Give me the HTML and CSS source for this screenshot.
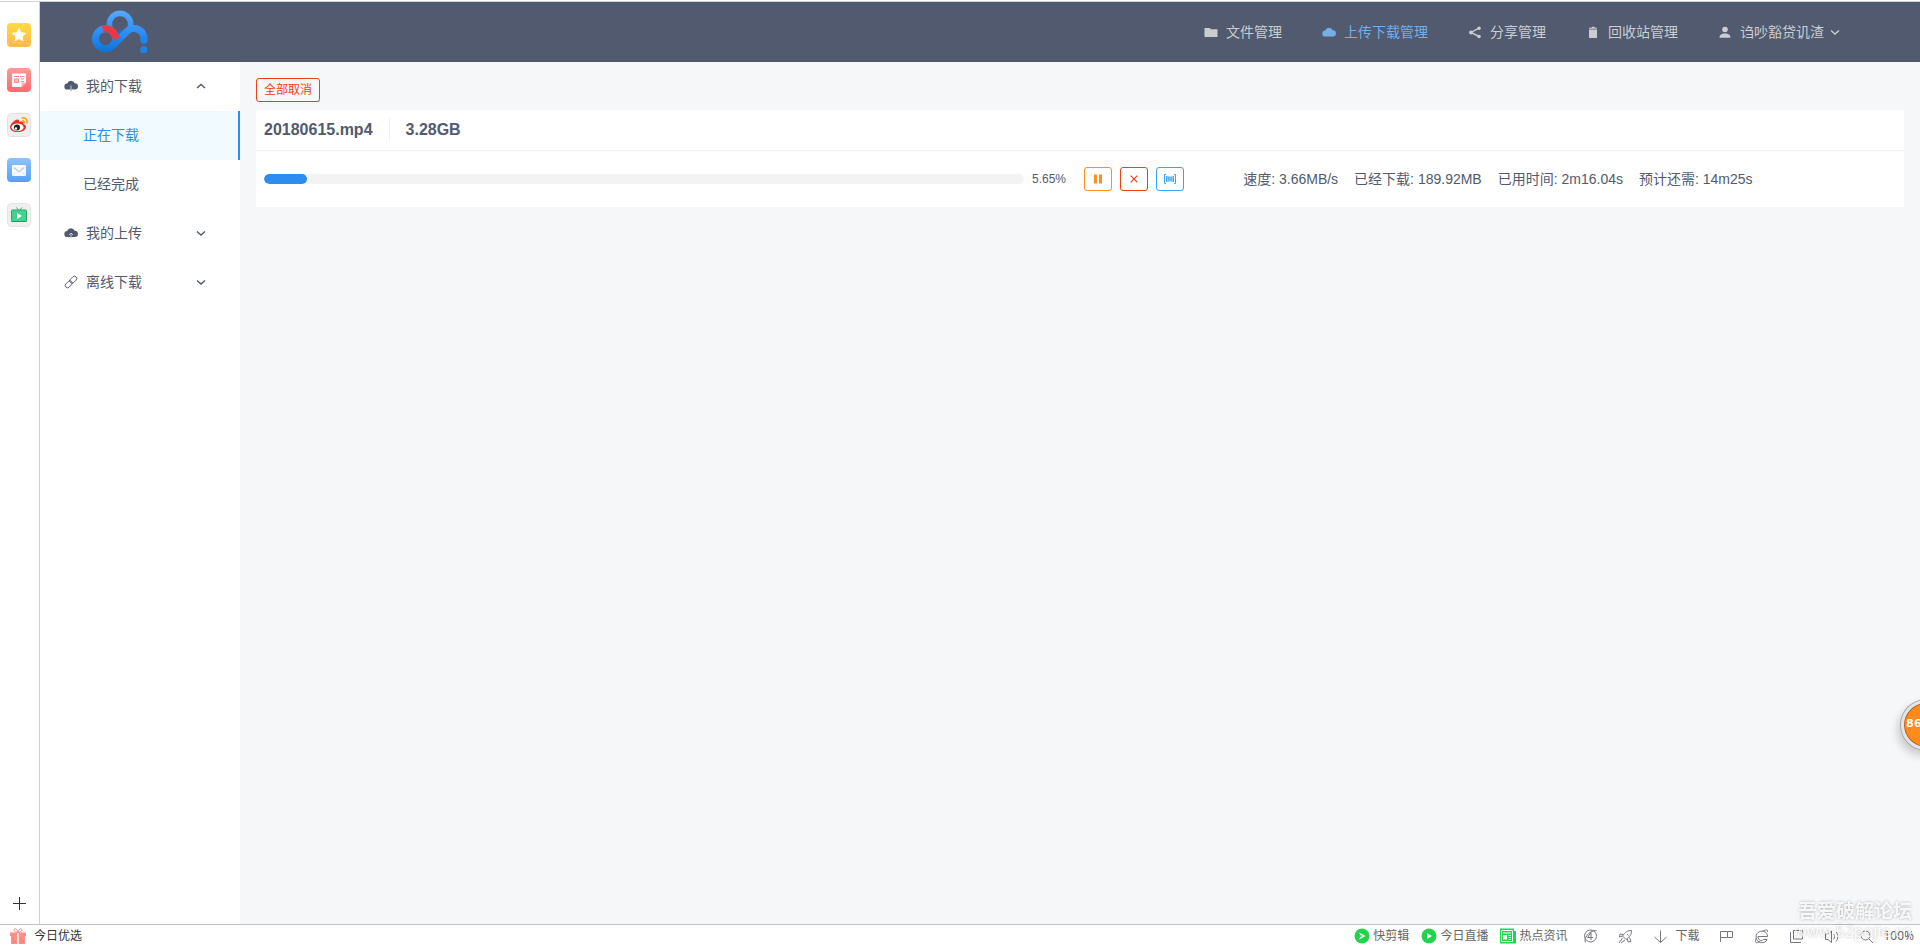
FILE: index.html
```html
<!DOCTYPE html>
<html lang="zh-CN">
<head>
<meta charset="utf-8">
<title>上传下载管理</title>
<link rel="stylesheet" href="styles.css">
</head>
<body>
<div class="workspace">
  <aside class="rail">
    <nav class="rail-list" aria-label="收藏">
      <a href="#" class="rail-link" aria-label="收藏夹"><svg viewBox="0 0 24 24"><defs><linearGradient id="gy" x2="0" y2="1"><stop stop-color="#ffdc3c"/><stop offset="1" stop-color="#ffb84e"/></linearGradient></defs><rect width="24" height="24" rx="4" fill="url(#gy)"/><path d="M12 4.500l2.200 4.700 5.100.7-3.700 3.500.9 5.100-4.500-2.500-4.500 2.500.9-5.100-3.700-3.500 5.100-.7z" fill="#fff"/></svg></a>
      <a href="#" class="rail-link" aria-label="新闻"><svg viewBox="0 0 24 24"><defs><linearGradient id="gr" x2="0" y2="1"><stop stop-color="#ff9a98"/><stop offset="1" stop-color="#ff6870"/></linearGradient></defs><rect width="24" height="24" rx="4" fill="url(#gr)"/><path d="M5 5.500h14v9l-4.500 4.500H5z" fill="#fff"/><path d="M7.500 11h4v3.500h-4zM7 8.500h5M13 8.500h4.500M14 11h3M14 13.500h3" fill="#ffc0c0" stroke="#ff8a8c"/><path d="M14.500 19v-4.500H19z" fill="#ffb0b0"/></svg></a>
      <a href="#" class="rail-link" aria-label="微博"><svg viewBox="0 0 24 24"><rect x=".5" y=".5" width="23" height="23" rx="4" fill="#efefef" stroke="#e2e2e2"/><path d="M3 14c0-3 5-8 8-7.500 1.500.3 1 2.500 1 2.500s4-1.500 4.500.5c.2 1-.3 1.500-.3 1.500 1.800.5 2.800 1.500 2.800 3 0 3-4 5-8.500 5S3 17 3 14z" fill="#e63228"/><ellipse cx="10.500" cy="14.300" rx="6" ry="3.900" fill="#fff"/><circle cx="10" cy="14.500" r="3" fill="#222"/><circle cx="9" cy="15.500" r="1.200" fill="#fff"/><path d="M14.500 5c4-1 6.500 2 5.500 5.500M15 8c1.800-.4 2.800.8 2.400 2.300" fill="none" stroke="#f7a325" stroke-width="1.700"/></svg></a>
      <a href="#" class="rail-link" aria-label="邮箱"><svg viewBox="0 0 24 24"><defs><linearGradient id="gb" x2="0" y2="1"><stop stop-color="#8cc4fa"/><stop offset="1" stop-color="#5a9df8"/></linearGradient></defs><rect width="24" height="24" rx="4" fill="url(#gb)"/><rect x="5" y="7" width="14" height="11" rx="1" fill="#f6f8fa"/><path d="M7 9.500l5 4.500 5-4.500" fill="none" stroke="#bccddd" stroke-width="1.300"/><path d="M6 17l3-3M18 17l-3-3" stroke="#dbe5ef"/></svg></a>
      <a href="#" class="rail-link" aria-label="视频"><svg viewBox="0 0 24 24"><rect x=".5" y=".5" width="23" height="23" rx="4" fill="#efefef" stroke="#e4e4e4"/><path d="M9.500 4.500l2 2.500M15 4.500l-2 2.500" stroke="#2fae74"/><rect x="4.500" y="7" width="15" height="11.500" rx="1" fill="#46d28e" stroke="#27a568"/><path d="M10 10l5 3-5 3z" fill="#fff"/><path d="M4.500 18.500h15" stroke="#1f9a5e"/></svg></a>
    </nav>
    <button class="rail-add" type="button" aria-label="添加"><svg viewBox="0 0 13 13"><path d="M6.500 0v13M0 6.500h13" stroke="#333"/></svg></button>
  </aside>

  <div class="page">
    <header class="topbar">
      <a href="#" class="logo" aria-label="百度网盘"><svg viewBox="0 0 58 44" fill="none">
        <defs><linearGradient id="lg" gradientUnits="userSpaceOnUse" x1="0" y1="1" x2="0" y2="43"><stop stop-color="#56a8fc"/><stop offset=".5" stop-color="#2f8ef4"/><stop offset="1" stop-color="#0b72d8"/></linearGradient></defs>
        <path d="M18 17.500A10.600 10.600 0 1 1 38 17.500" stroke="url(#lg)" stroke-width="5.600"/>
        <path d="M23 24.500l5-4.500h7l-6 10z" fill="#1173da"/>
        <circle cx="13.500" cy="28.700" r="10" stroke="url(#lg)" stroke-width="7"/>
        <path d="M20.600 35.800L34.900 21.600A10 10 0 0 1 52 29.500v1" stroke="url(#lg)" stroke-width="7"/>
        <circle cx="52" cy="30.300" r="3.500" fill="#1f84ee"/>
        <path d="M10.800 19.100A10 10 0 0 1 23 25.500l1.800 3.500" stroke="#ec3740" stroke-width="7"/>
        <circle cx="51.700" cy="39.700" r="3.600" fill="#1f82e6"/></svg></a>
      <nav class="topnav" aria-label="主菜单">
        <a href="#" class="topnav-link"><svg class="ico" viewBox="0 0 14 14"><path d="M.5 3h5l1.500 1.300h6.500v7.700H.5z" fill="currentColor"/></svg>文件管理</a>
        <a href="#" class="topnav-link active"><svg class="ico" viewBox="0 0 14 14"><path d="M3.500 11.500a3 3 0 0 1-.3-6 4 4 0 0 1 7.500-.2A3.100 3.100 0 0 1 11 11.500z" fill="currentColor"/></svg>上传下载管理</a>
        <a href="#" class="topnav-link"><svg class="ico" viewBox="0 0 14 14"><path d="M11 3.200L3 7.500l8 4" fill="none" stroke="currentColor" stroke-width="1.400"/><circle cx="11" cy="3.200" r="1.800" fill="currentColor"/><circle cx="3" cy="7.500" r="1.900" fill="currentColor"/><circle cx="11" cy="11.500" r="1.800" fill="currentColor"/></svg>分享管理</a>
        <a href="#" class="topnav-link"><svg class="ico" viewBox="0 0 14 14"><path d="M3 4.500h8v8.500H3zM3 2.700h2.500l.5-.9h2.500l.5.9H11v1H3z" fill="currentColor"/></svg>回收站管理</a>
        <a href="#" class="topnav-link"><svg class="ico" viewBox="0 0 14 14"><circle cx="7" cy="4.500" r="2.800" fill="currentColor"/><path d="M1.500 12.700c0-3 2-3.500 4-4.200h3c2 .7 4 1.200 4 4.200z" fill="currentColor"/></svg>诌吵豁贷讥渣<svg class="caret" viewBox="0 0 10 10"><path d="M1 3.500L5 7l4-3.500" fill="none" stroke="currentColor" stroke-width="1.400"/></svg></a>
      </nav>
    </header>

    <div class="body">
      <nav class="side" aria-label="传输">
        <button type="button" class="side-title" aria-expanded="true"><svg class="ico" viewBox="0 0 14 14"><path d="M3.500 10.500a3 3 0 0 1-.3-6 4 4 0 0 1 7.500-.2A3.100 3.100 0 0 1 11 10.500z" fill="currentColor"/><path d="M7 6.500V12M5.300 10.300L7 12l1.700-1.700" fill="none" stroke="#c3c8d2"/></svg>我的下载<svg class="caret" viewBox="0 0 10 10"><path d="M1 7l4-3.500L9 7" fill="none" stroke="currentColor" stroke-width="1.400"/></svg></button>
        <a href="#" class="side-link active">正在下载</a>
        <a href="#" class="side-link">已经完成</a>
        <button type="button" class="side-title" aria-expanded="false"><svg class="ico" viewBox="0 0 14 14"><path d="M3.500 11a3 3 0 0 1-.3-6 4 4 0 0 1 7.500-.2A3.100 3.100 0 0 1 11 11z" fill="currentColor"/><path d="M7 12.500V7M5 9l2-2 2 2" fill="none" stroke="#c3c8d2"/></svg>我的上传<svg class="caret" viewBox="0 0 10 10"><path d="M1 3.500L5 7l4-3.500" fill="none" stroke="currentColor" stroke-width="1.400"/></svg></button>
        <button type="button" class="side-title" aria-expanded="false"><svg class="ico" viewBox="0 0 14 14"><g fill="none" stroke="currentColor" stroke-width=".9" transform="rotate(-45 7 7)"><rect x="-.2" y="4.700" width="8" height="4.600" rx="2.300"/><rect x="6.200" y="4.700" width="8" height="4.600" rx="2.300"/></g></svg>离线下载<svg class="caret" viewBox="0 0 10 10"><path d="M1 3.500L5 7l4-3.500" fill="none" stroke="currentColor" stroke-width="1.400"/></svg></button>
      </nav>

      <main class="content">
        <button type="button" class="btn btn-cancel-all">全部取消</button>
        <section class="card">
          <div class="card-head"><h2 class="file-name">20180615.mp4</h2><span class="file-size">3.28GB</span></div>
          <div class="card-row">
            <div class="progress">
              <div class="track" role="progressbar" aria-label="下载进度" aria-valuenow="5.65" aria-valuemin="0" aria-valuemax="100"><div class="fill" style="width:5.65%"></div></div>
              <span class="percent">5.65%</span>
            </div>
            <div class="actions">
              <button type="button" class="btn btn-icon orange" aria-label="暂停"><svg viewBox="0 0 12 12"><path d="M2 1.500h3v9H2zM7 1.500h3v9H7z" fill="currentColor"/></svg></button>
              <button type="button" class="btn btn-icon red" aria-label="取消"><svg viewBox="0 0 12 12"><path d="M2.700 2.700l6.600 6.600M9.300 2.700L2.700 9.300" stroke="currentColor" stroke-width="1.200"/></svg></button>
              <button type="button" class="btn btn-icon blue" aria-label="详情"><svg viewBox="0 0 12 12"><path d="M2 1.500H.5v9H2M10 1.500h1.500v9H10" fill="none" stroke="currentColor"/><path d="M2.800 3v6M4.900 3.500v5M7 3.500v5M9.200 3v6" stroke="currentColor" stroke-width="1.500"/></svg></button>
            </div>
            <div class="stats"><span>速度: 3.66MB/s</span><span>已经下载: 189.92MB</span><span>已用时间: 2m16.04s</span><span>预计还需: 14m25s</span></div>
          </div>
        </section>
      </main>
    </div>
  </div>
</div>

<footer class="status">
  <a href="#" class="promo"><svg class="ico16" viewBox="0 0 16 16"><path d="M0 4.500h7.300v3.500H0zM8.700 4.500H16v3.500H8.700zM1 8h6.300v8H1zM8.700 8H15v8H8.700z" fill="#ff8d88"/><path d="M8 4.500C4 4.500 3 .8 5.200.8S8 4.500 8 4.500s.6-3.700 2.800-3.700S12 4.500 8 4.500z" fill="none" stroke="#f0888a"/><path d="M3 11h1M5 13.500h1M3 14h1M11 11h1M13 13h1M10.500 14h1" stroke="#d96a70"/></svg>今日优选</a>
  <div class="promos">
    <a href="#" class="promo"><svg class="ico16" viewBox="0 0 16 16"><circle cx="8" cy="8" r="7.500" fill="#22d34e"/><path d="M5 4.500L11.500 8 5 11.500 7 8z" fill="#fff"/><path d="M4.500 8h4" stroke="#22d34e"/></svg>快剪辑</a>
    <a href="#" class="promo"><svg class="ico16" viewBox="0 0 16 16"><circle cx="8" cy="8" r="7.500" fill="#22d34e"/><path d="M6 5l5 3-5 3z" fill="#fff"/></svg>今日直播</a>
    <a href="#" class="promo"><svg class="ico16" viewBox="0 0 16 16"><path d="M0 .5h14v2.500h2V15.500H0z" fill="#22d34e"/><path d="M1.500 2.500h11v11h-11zM3 5h8" fill="none" stroke="#fff"/><path d="M3 7h4v4.500H3z" fill="#fff"/><path d="M8.500 7.500H11M8.500 9.500H11M8.500 11.500H11" stroke="#fff"/></svg>热点资讯</a>
  </div>
  <div class="tools">
    <button type="button" class="tool" aria-label="加速"><svg viewBox="0 0 15 15"><path d="M12 3A6 6 0 1 0 13.500 7.500c0-2-.8-3.500-1.500-4.500M3 13.500C-.5 12 5 1 13.500 1.500M4.500 8.500l3.500-5v5zM8 8.500v2.500M8 8.500h2"/></svg></button>
    <button type="button" class="tool" aria-label="清理"><svg viewBox="0 0 15 15"><path d="M13.500 1.500c-4 0-6 1.500-9 5.500l3.500 3.500c4-3 5.500-5 5.500-9zM5.500 5.500L2 5l-.5 3 3-1M9.500 9.500l.5 3.500 3-.5-1.500-4M4.500 9L1 14M7 11l-4 3M9 5l1.500 1.500"/></svg></button>
    <button type="button" class="tool"><svg viewBox="0 0 15 15"><path d="M7.500 1.500v12M1.500 8l6 5.500 6-5.500"/></svg>下载</button>
    <button type="button" class="tool" aria-label="标记"><svg viewBox="0 0 15 15"><path d="M1.500 13V2.500h7v6h-7M8.500 2.500h5v6h-5"/></svg></button>
    <button type="button" class="tool" aria-label="内核"><svg viewBox="0 0 15 15"><path d="M4 7.500h9.500C13.500 0 2 .5 2 8c0 6.500 9.500 7.500 11 2.500H9.500c-1 2-5.500 1.500-5.500-3M13.500 3c1-3-2.500-2-5-.8M2.500 9C0 13.500 2 15 6 12.500"/></svg></button>
    <button type="button" class="tool" aria-label="窗口"><svg viewBox="0 0 15 15"><path d="M4.500 1.500h9v8.500h-9zM1.500 3v10.500H12"/></svg></button>
    <button type="button" class="tool" aria-label="声音"><svg viewBox="0 0 15 15"><path d="M1.500 5H4l3.500-3v11.500L4 10.500H1.500zM9.500 5c1.300 1.500 1.300 4 0 5.500M12 3c2.300 2.500 2.300 7 0 9.500"/></svg></button>
    <button type="button" class="tool zoom"><svg viewBox="0 0 15 15"><circle cx="6.500" cy="6.500" r="4.500"/><path d="M10 10l4 4"/></svg>100%</button>
  </div>
</footer>

<div class="ball">86</div>
<div class="watermark"><div class="mark-name">吾爱破解论坛</div><div class="mark-url">www.52pojie.cn</div></div>
</body>
</html>
```
FILE: styles.css
```css
* { box-sizing: border-box; }
body {
  margin: 0;
  min-height: 100vh;
  display: flex;
  flex-direction: column;
  overflow-x: hidden;
  font: 14px/20px "Liberation Sans", "Noto Sans CJK SC", sans-serif;
  color: #515a6e;
  background: #fff;
}
a { color: inherit; text-decoration: none; }
button { font: inherit; color: inherit; background: none; border: 0; padding: 0; cursor: pointer; }
svg { display: block; flex: none; }

.workspace { flex: 1; display: flex; margin-top: 1px; border-top: 1px solid #d2d4d4; }

.rail {
  width: 40px;
  display: flex;
  flex-direction: column;
  justify-content: space-between;
  padding: 21px 0 14px;
  border-right: 1px solid #d0d0d0;
}
.rail-list { display: flex; flex-direction: column; gap: 21px; padding-left: 7px; }
.rail-link, .rail-link svg { width: 24px; height: 24px; }
.rail-add { padding-left: 13px; }
.rail-add svg { width: 13px; height: 13px; }

.page { flex: 1; min-width: 0; display: flex; flex-direction: column; }
.topbar {
  height: 60px;
  display: flex;
  align-items: center;
  justify-content: space-between;
  padding: 0 80px 0 52px;
  background: #515a6e;
}
.logo svg { width: 58px; height: 44px; }
.topnav { display: flex; gap: 40px; color: #cbcdd2; }
.topnav-link { display: flex; align-items: center; gap: 8px; white-space: nowrap; }
.topnav-link.active { color: #74afe8; }
.topnav-link .caret { margin-left: -2px; }
.ico { width: 14px; height: 14px; }
.caret { width: 10px; height: 10px; }

.body { flex: 1; display: flex; }
.side { width: 200px; flex: none; background: #fff; }
.side-title, .side-link { display: flex; align-items: center; width: 100%; height: 49px; padding-bottom: 2px; }
.side-title { gap: 8px; padding-left: 24px; padding-right: 34px; }
.side-title .caret { margin-left: auto; }
.side-link { padding-left: 43px; }
.side-link.active { color: #2d8cf0; background: #f0faff; border-right: 2px solid #2d8cf0; }

.content { flex: 1; min-width: 0; padding: 16px; background: #f5f7f9; }
.btn { display: block; height: 24px; border: 1px solid currentColor; border-radius: 3px; font-size: 12px; line-height: 20px; }
.btn-cancel-all { padding: 0 7px; color: #ed4014; }
.card { margin-top: 8px; background: #fff; }
.card-head {
  display: flex;
  align-items: center;
  height: 41px;
  padding: 0 8px;
  border-bottom: 1px solid #f0f3fb;
  font-size: 16px;
  font-weight: bold;
}
.file-name { margin: 0; font-size: 16px; line-height: 24px; padding-right: 16px; border-right: 1px solid #eef1f9; }
.file-size { padding-left: 16px; line-height: 24px; }
.card-row { display: grid; grid-template-columns: 50% 10% 1fr; align-items: center; height: 56px; padding: 0 8px; }
.progress { display: flex; align-items: center; gap: 8px; }
.track { flex: 1; height: 10px; border-radius: 5px; background: #f3f3f3; overflow: hidden; }
.fill { height: 10px; border-radius: 5px; background: #2d8cf0; }
.percent { width: 48px; font-size: 12px; }
.actions { display: flex; gap: 8px; padding-left: 4px; }
.btn-icon { width: 28px; display: flex; align-items: center; justify-content: center; }
.btn-icon svg { width: 12px; height: 12px; }
.orange { color: #ff9020; }
.red { color: #ed4014; }
.blue { color: #3ba3f2; }
.stats { display: flex; gap: 16px; white-space: nowrap; }

.status {
  display: flex;
  align-items: center;
  height: 23px;
  padding: 0 6px 0 10px;
  border-top: 1px solid #c2c2c2;
  font-size: 12px;
  color: #333;
}
.promo { display: flex; align-items: center; gap: 3px; white-space: nowrap; }
.status > .promo { gap: 8px; }
.ico16 { width: 16px; height: 16px; }
.promos { display: flex; gap: 12px; margin-left: auto; color: #666; }
.tools { display: flex; gap: 20px; margin-left: 16px; color: #666; }
.tool { display: flex; align-items: center; gap: 7px; white-space: nowrap; }
.tool svg { width: 15px; height: 15px; fill: none; stroke: #77777f; }
.zoom { font-family: "Noto Sans", sans-serif; gap: 9px; }

.ball {
  position: fixed;
  right: -31px;
  top: 700px;
  width: 50px;
  height: 50px;
  padding-left: 2px;
  border: 3px solid #e4e4e6;
  border-radius: 50%;
  background: #ff8c1a;
  box-shadow: inset 0 0 0 1px #a8622c, 0 0 0 1px #a9a9ad, -3px 5px 10px rgba(0, 0, 0, .2);
  color: #fff;
  font: bold 11px/42px "DejaVu Sans", sans-serif;
}
.watermark {
  position: fixed;
  right: 8px;
  bottom: 7px;
  text-align: right;
  color: rgba(255, 255, 255, .85);
  text-shadow: 0 0 3px rgba(0, 0, 0, .3);
  pointer-events: none;
}
.mark-name { font: bold 19px/24px "Noto Sans CJK SC", sans-serif; }
.mark-url { font: 16px/18px "Open Sans", sans-serif; }
```
